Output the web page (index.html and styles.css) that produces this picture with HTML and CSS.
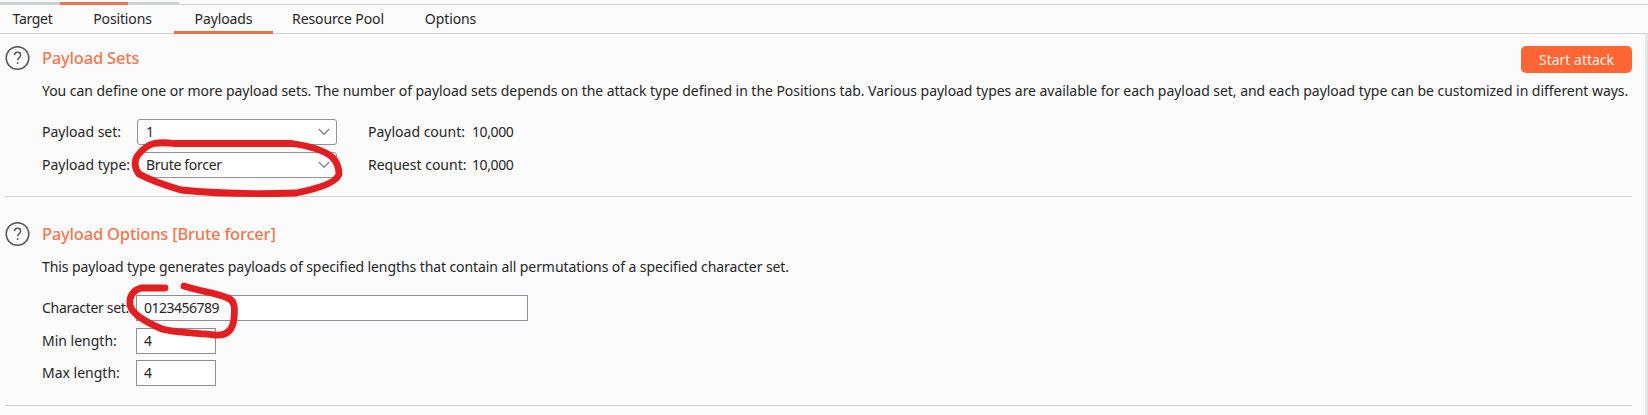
FILE: index.html
```html
<!DOCTYPE html>
<html lang="en">
<head>
<meta charset="utf-8">
<title>Intruder - Payloads</title>
<link rel="stylesheet" href="styles.css">
</head>
<body>
<div class="parent-tabs"><span class="parent-active"></span></div>
<nav class="tabs">
  <span class="tab t-target">Target</span>
  <span class="tab t-positions">Positions</span>
  <span class="tab t-payloads active">Payloads</span>
  <span class="tab t-pool">Resource Pool</span>
  <span class="tab t-options">Options</span>
</nav>
<main class="content">
  <div class="page">
    <section class="section sets">
      <svg class="help" viewBox="0 0 26 26"><circle cx="12.500" cy="13" r="11.3"/><path d="M9.400 10.1C9.500 8.3 10.700 7.3 12.500 7.3s3.2 1.1 3.2 2.7c0 2.5-3.1 2.5-3.1 5.3"/><path d="M12.600 17.2v1.8"/></svg>
      <div class="body">
        <header class="head"><h2 class="h-sets">Payload Sets</h2><button class="start">Start attack</button></header>
        <p class="desc d-sets">You can define one or more payload sets. The number of payload sets depends on the attack type defined in the Positions tab. Various payload types are available for each payload set, and each payload type can be customized in different ways.</p>
        <div class="rows">
          <div class="row"><label class="label loose">Payload set:</label><div class="select">1<svg class="chev" viewBox="0 0 12 8"><path d="M.8 1 6 6.2 11.2 1"/></svg></div><span class="count">Payload count:</span><span class="num">10,000</span></div>
          <div class="row"><label class="label loose">Payload type:</label><div class="select">Brute forcer<svg class="chev" viewBox="0 0 12 8"><path d="M.8 1 6 6.2 11.2 1"/></svg></div><span class="count">Request count:</span><span class="num">10,000</span></div>
        </div>
      </div>
    </section>
    <section class="section options">
      <svg class="help" viewBox="0 0 26 26"><circle cx="12.500" cy="13" r="11.3"/><path d="M9.400 10.1C9.500 8.3 10.700 7.3 12.500 7.3s3.2 1.1 3.2 2.7c0 2.5-3.1 2.5-3.1 5.3"/><path d="M12.600 17.2v1.8"/></svg>
      <div class="body">
        <header class="head"><h2 class="h-options">Payload Options [Brute forcer]</h2></header>
        <p class="desc d-options">This payload type generates payloads of specified lengths that contain all permutations of a specified character set.</p>
        <div class="rows">
          <div class="row"><label class="label short">Character set:</label><div class="input wide">0123456789</div></div>
          <div class="row"><label class="label short loose">Min length:</label><div class="input">4</div></div>
          <div class="row"><label class="label short loose">Max length:</label><div class="input">4</div></div>
        </div>
      </div>
    </section>
  </div>
  <div class="scrollbar"></div>
</main>
<svg class="marks" viewBox="0 0 1648 415">
  <path d="M174 143.500H292C309 146 325 151 332 157C337 162 339 169 339 174C337 183 316 189 296 193C262 194 218 194 181 190C164 185 150 180 139 174C134 168 134 160 138 155C142 150 147 145 154 143.500Q163 142 174 143.500"/>
  <path d="M165 288H141C133 290 129 297 130 304C130 312 143 321 162 329C176 333 198 333 215 335C227 336 233 330 234 318C235 308 235 301 228 298C216 293 199 291 184 286"/>
</svg>
</body>
</html>
```

FILE: styles.css
```css
* { box-sizing: border-box; }
body {
  margin: 0; width: 1648px; height: 415px; overflow: hidden;
  display: flex; flex-direction: column;
  background: #fbfbfb; color: #262626;
  font: 14px/20px "Noto Sans", "Open Sans", sans-serif;
  letter-spacing: -0.3px; white-space: nowrap;
}
.parent-tabs {
  height: 5px; flex: none; display: flex; align-items: flex-start; padding-left: 60px;
  border-bottom: 1px solid #d2d2d4;
  background: linear-gradient(#cccfd1, #cccfd1) 0 2px / 179px 2px no-repeat;
}
.parent-active { width: 68px; height: 3px; margin-top: 2px; background: #ee7350; flex: none; }
.tabs { height: 29px; flex: none; display: flex; border-bottom: 1px solid #d2d2d4; }
.tab { height: 29px; line-height: 27px; display: flex; justify-content: center; }
.t-target { width: 65px; }
.t-positions { width: 115px; letter-spacing: -0.15px; }
.t-payloads { width: 99px; margin-left: -6px; letter-spacing: -0.1px; }
.t-pool { width: 130px; letter-spacing: -0.1px; }
.t-options { width: 95px; letter-spacing: -0.1px; }
.active { border-bottom: 3px solid #ee6f4a; }
.content { flex: 1; display: flex; justify-content: space-between; min-height: 0; }
.page { width: 1632px; padding-left: 5px; }
.scrollbar { width: 3px; background: #e6e6e6; }
.section { display: flex; border-bottom: 1px solid #cecece; padding-top: 11px; }
.sets { height: 163px; }
.options { height: 209px; padding-top: 24px; }
.help { width: 26px; height: 26px; margin-right: 11px; flex: none; fill: none; stroke: #555; stroke-width: 1.5; }
.body { flex: 1; min-width: 0; }
.head { height: 27px; display: flex; justify-content: space-between; align-items: flex-start; }
h2 { margin: 1px 0 0; font-size: 16.5px; line-height: 24px; font-weight: 500; letter-spacing: -0.2px; color: #f2774f; }
.start {
  width: 111px; height: 27px; margin-top: 1px; padding: 0; border: 0; border-radius: 5px; background: #ff6633;
  color: #fff1eb; font: inherit; letter-spacing: 0;
}
.desc { margin: 9px 0 0; height: 20px; }
.d-sets { letter-spacing: -0.043px; }
.d-options { letter-spacing: -0.085px; }
.rows { margin-top: 18px; display: flex; flex-direction: column; gap: 6px; }
.row { height: 26.5px; display: flex; align-items: center; }
.label { width: 95px; flex: none; }
.label.short { width: 94px; }
.loose { letter-spacing: 0; }
.select { width: 200px; height: 26px; padding: 0 8px; display: flex; align-items: center; justify-content: space-between; border: 1px solid #92929d; border-radius: 3px; background: #fff; }
.chev { width: 12px; height: 8px; margin-right: -2px; fill: none; stroke: #858585; stroke-width: 1.4; }
.count { width: 104px; margin-left: 31px; letter-spacing: 0; }
.num { letter-spacing: -0.4px; }
.input { width: 80px; height: 26px; padding: 0 7px; display: flex; align-items: center; border: 1px solid #8d8d9b; background: #fff; }
.wide { width: 392px; letter-spacing: -0.5px; }
.marks { position: absolute; left: 0; top: 0; width: 1648px; height: 415px; fill: none; stroke: #e31e20; stroke-width: 6.8; stroke-linecap: round; stroke-linejoin: round; pointer-events: none; }
```
